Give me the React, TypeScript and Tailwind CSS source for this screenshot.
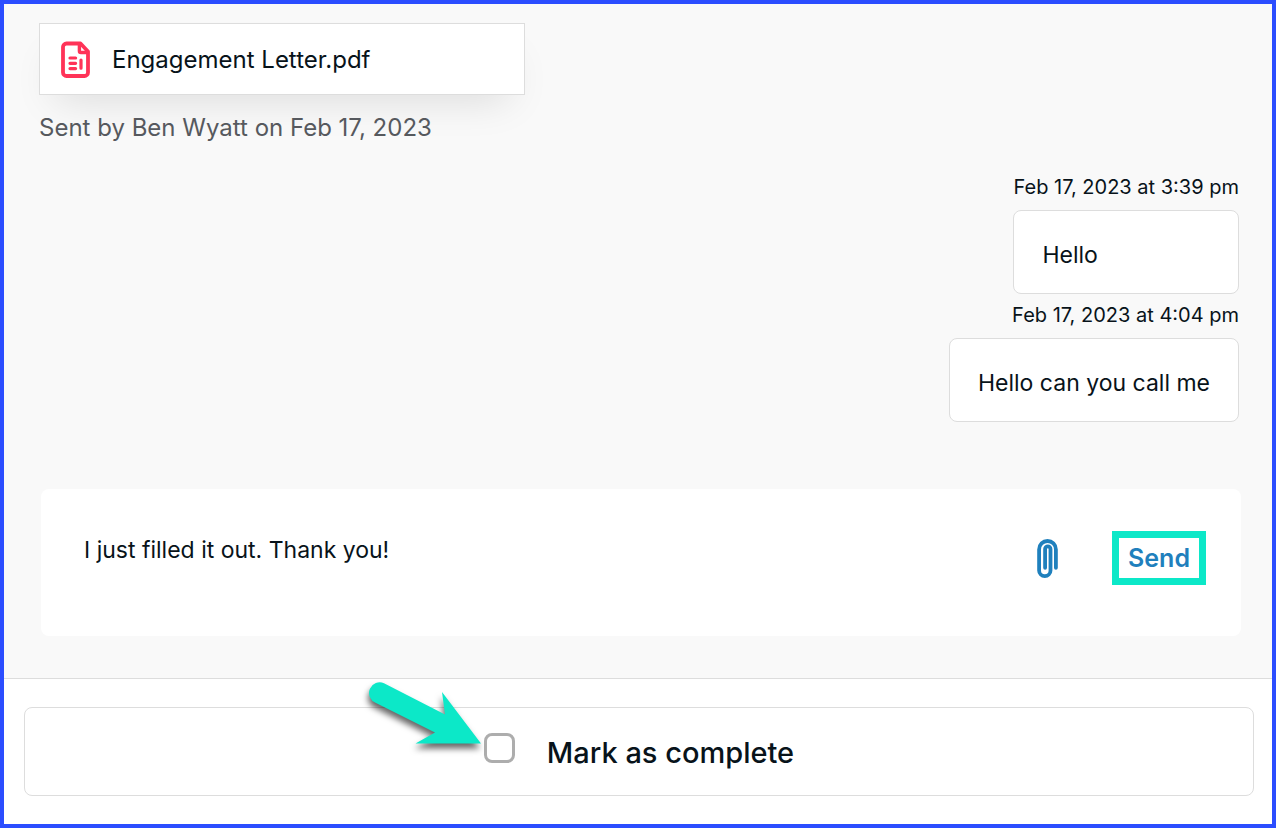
import { useState } from "react";

type Message = { sentAt: string; body: string };

const messages: Message[] = [
  { sentAt: "Feb 17, 2023 at 3:39 pm", body: "Hello" },
  { sentAt: "Feb 17, 2023 at 4:04 pm", body: "Hello can you call me" },
];

function FileIcon() {
  return (
    <svg width="30" height="38" viewBox="0 0 30 38" fill="none" stroke="#ff3358" strokeLinejoin="round" strokeLinecap="round" aria-hidden="true">
      <path d="M5.5 2.5H19.5L27 10.5V31.5A3.5 3.5 0 0 1 23.5 35H5.5A3.5 3.5 0 0 1 2 31.5V6A3.5 3.5 0 0 1 5.5 2.5Z" strokeWidth="3.8" />
      <path d="M18.4 3V10A1.5 1.5 0 0 0 19.9 11.5H26.5" strokeWidth="3.4" />
      <path d="M9 17H14.6M9 22.3H14.6M9 27.6H14.6M20 19V27.2" strokeWidth="3.2" />
    </svg>
  );
}

function PaperclipIcon() {
  return (
    <svg width="21" height="40" viewBox="0 0 21 40" fill="none" stroke="#1f80bd" strokeLinecap="round" aria-hidden="true">
      <path d="M18.9 28.8V10.4A8.4 8.4 0 0 0 2.1 10.4V31.5A5.7 5.7 0 0 0 13.5 31.5V10A2.7 2.7 0 0 0 8.1 10V28.8" strokeWidth="3.8" />
    </svg>
  );
}

function Arrow() {
  return (
    <svg
      className="absolute -top-[53px] right-full mr-0.5 max-w-none drop-shadow-[-1px_5px_3px_rgba(0,0,0,0.6)]"
      width="114"
      height="64"
      viewBox="0 0 114 64"
      fill="#0ce8c8"
      aria-hidden="true"
    >
      <path d="M16 3.2L77 34.5L74 12L113 63.5H47.5L67 52.5L7.5 22.8A10.3 10.3 0 0 1 16 3.2Z" />
    </svg>
  );
}

function MessageBubble({ message }: { message: Message }) {
  return (
    <div className="mb-[5px] flex w-fit flex-col gap-[7px]">
      <time className="text-right text-[20px] leading-8">{message.sentAt}</time>
      <div className="rounded-lg border border-[#dddddd] bg-white px-7 pt-7 pb-[22px] text-[23px] leading-8">
        {message.body}
      </div>
    </div>
  );
}

export default function App() {
  const [draft, setDraft] = useState("I just filled it out. Thank you!");
  const [complete, setComplete] = useState(false);

  return (
    <div className="flex min-h-screen flex-col border-4 border-[#2b4dff] bg-white font-[Inter,sans-serif] text-[#08131a]">
      <main className="flex-1 border-b border-[#dddddd] bg-[#f9f9f9] pt-[19px] pr-[33px] pb-[42px] pl-[35px]">
        <a
          href="#engagement-letter"
          className="flex h-18 w-full max-w-[486px] items-center gap-[21px] border border-[#dddddd] bg-white px-[21px] pt-0.5 text-[24px] leading-8 shadow-[0_20px_40px_-16px_rgba(0,0,0,0.13)]"
        >
          <FileIcon />
          Engagement Letter.pdf
        </a>
        <p className="mt-[17px] text-[24px] leading-8 text-[#56595e]">Sent by Ben Wyatt on Feb 17, 2023</p>

        <section className="mt-[27px] flex flex-col items-end">
          {messages.map((message) => (
            <MessageBubble key={message.sentAt} message={message} />
          ))}
        </section>

        <form
          className="mt-[62px] -mr-0.5 ml-0.5 flex items-start rounded-lg bg-white pt-[42px] pr-[35px] pb-1.5 pl-[43px]"
          onSubmit={(e) => e.preventDefault()}
        >
          <textarea
            aria-label="Message"
            rows={3}
            value={draft}
            onChange={(e) => setDraft(e.target.value)}
            className="block min-w-0 flex-1 resize-none bg-transparent pt-[3px] text-[23px] leading-8 outline-none"
          />
          <button type="button" aria-label="Attach file" className="mt-2 mr-[54px] ml-6">
            <PaperclipIcon />
          </button>
          <button
            type="submit"
            className="border-[7px] border-[#0ce8c8] px-[9px] py-1 text-[25px] leading-8 font-semibold text-[#1f80bd]"
          >
            Send
          </button>
        </form>
      </main>

      <footer className="py-7 pr-[18px] pl-5">
        <label className="flex items-start justify-center gap-8 rounded-lg border border-[#dddddd] px-5 pt-[25px] pb-[23px] text-[29px] leading-[39px] font-medium">
          <span className="relative flex">
            <Arrow />
            <input
              type="checkbox"
              checked={complete}
              onChange={(e) => setComplete(e.target.checked)}
              className="h-[30px] w-[31px] appearance-none rounded-lg border-3 border-[#adadad] bg-white checked:bg-[#1f80bd]"
            />
          </span>
          Mark as complete
        </label>
      </footer>
    </div>
  );
}
